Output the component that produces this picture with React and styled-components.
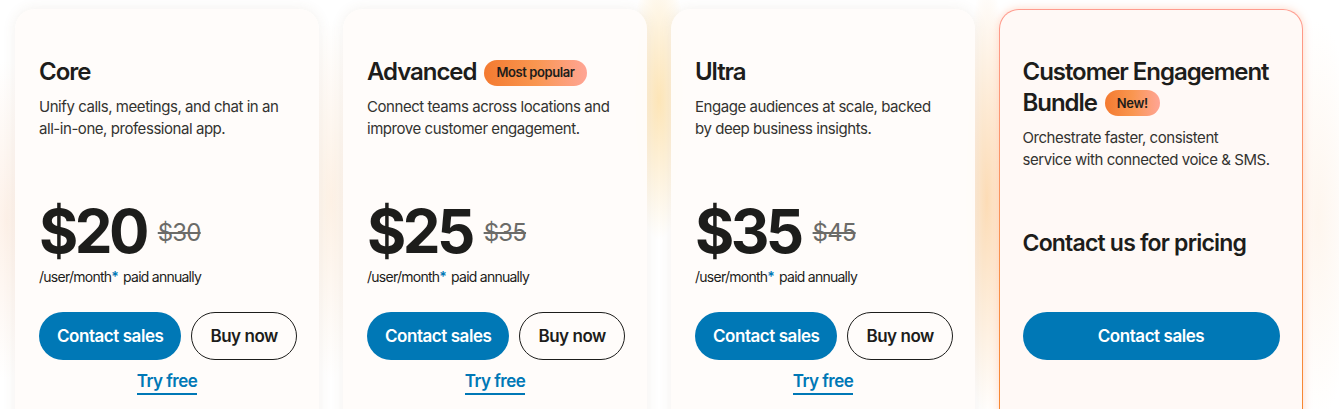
import React from "react";
import styled, { createGlobalStyle, css } from "styled-components";

const GlobalStyle = createGlobalStyle`
  html, body {
    margin: 0;
    padding: 0;
    background: #ffffff;
    overflow: hidden;
  }
  body {
    font-family: Inter, "Liberation Sans", Arial, sans-serif;
    color: #1d1d1b;
  }
`;

const Page = styled.div`
  height: 409px;
  padding: 9px 15px 0;
  box-sizing: border-box;
  background:
    radial-gradient(ellipse 30px 140px at 659px 100px, rgba(252, 212, 135, 0.6), rgba(252, 212, 135, 0) 100%),
    radial-gradient(ellipse 26px 220px at 987px 200px, rgba(250, 190, 120, 0.55), rgba(250, 190, 120, 0) 100%),
    radial-gradient(ellipse 40px 160px at 6px 220px, rgba(250, 215, 190, 0.35), rgba(250, 215, 190, 0) 100%),
    radial-gradient(ellipse 30px 180px at 331px 200px, rgba(250, 215, 180, 0.35), rgba(250, 215, 180, 0) 100%),
    radial-gradient(ellipse 40px 200px at 1318px 220px, rgba(252, 225, 200, 0.3), rgba(252, 225, 200, 0) 100%),
    #ffffff;
`;

const Grid = styled.div`
  display: grid;
  grid-template-columns: repeat(4, 304px);
  gap: 24px;
`;

const Card = styled.div`
  height: 430px;
  box-sizing: border-box;
  padding: 47px 24px 0;
  border-radius: 20px;
  background: rgba(255, 252, 250, 0.94);
  box-shadow: 0 0 14px rgba(120, 90, 60, 0.09);
  display: flex;
  flex-direction: column;

  ${(p) =>
    p.$featured &&
    css`
      border: 1.5px solid transparent;
      padding: 45.5px 22.5px 0;
      background:
        linear-gradient(#fff9f6, #fff9f6) padding-box,
        linear-gradient(180deg, #ff9b8e 0%, #f9904a 60%, #f6852c 100%) border-box;
      box-shadow: 0 0 8px rgba(255, 140, 90, 0.35);
    `}
`;

const Header = styled.div`
  min-height: 142px;
`;

const Title = styled.h3`
  margin: 0;
  font-size: 24px;
  line-height: 31px;
  font-weight: 600;
  letter-spacing: -1.05px;
  color: #1d1d1b;
`;

const Badge = styled.span`
  display: inline-flex;
  align-items: center;
  height: 26px;
  padding: 0 12px;
  margin-left: 8px;
  border-radius: 13px;
  vertical-align: 3px;
  font-size: 13px;
  font-weight: 600;
  letter-spacing: -0.4px;
  color: #1d1d1b;
  background: linear-gradient(90deg, #f47a30 0%, #f99650 50%, #ffa595 100%);
`;

const Desc = styled.p`
  margin: 9px 0 0;
  font-size: 15px;
  line-height: 22px;
  letter-spacing: -0.45px;
  color: #333330;
  white-space: nowrap;
`;

const PriceBlock = styled.div`
  height: 90px;
  display: flex;
  flex-direction: column;
  justify-content: center;
`;

const PriceRow = styled.div`
  display: flex;
  align-items: center;
  gap: 12px;
  height: 62px;
`;

const Price = styled.span`
  font-size: 60px;
  font-weight: 700;
  letter-spacing: -3.6px;
  line-height: 62px;
  color: #1d1d1b;
`;

const OldPrice = styled.s`
  font-size: 24px;
  letter-spacing: -0.8px;
  color: #6b6b68;
  text-decoration-thickness: 1.5px;
  margin-top: 2px;
`;

const Terms = styled.div`
  margin-top: 6px;
  font-size: 14px;
  line-height: 18px;
  letter-spacing: -0.75px;
  color: #1d1d1b;
`;

const Star = styled.span`
  color: #0077b6;
  font-weight: 600;
  margin-right: 5px;
`;

const Contact = styled.div`
  font-size: 23px;
  font-weight: 600;
  letter-spacing: -0.8px;
  color: #1d1d1b;
`;

const Actions = styled.div`
  margin-top: 24px;
  display: flex;
  gap: 10px;
`;

const Button = styled.button`
  flex: none;
  height: 48px;
  padding: 0 18px;
  border-radius: 24px;
  white-space: nowrap;
  font-family: inherit;
  font-size: 17px;
  font-weight: 600;
  letter-spacing: -0.45px;
  cursor: pointer;
  box-sizing: border-box;
  ${(p) =>
    p.$primary
      ? css`
          background: #0078b6;
          color: #ffffff;
          border: none;
        `
      : css`
          background: transparent;
          color: #1d1d1b;
          border: 1px solid #1d1d1b;
        `}
  ${(p) => p.$wide && css`flex: 1;`}
`;

const TryRow = styled.div`
  width: 256px;
  display: flex;
  justify-content: center;
  margin-top: 9px;
`;

const TryLink = styled.a`
  font-size: 17px;
  font-weight: 600;
  letter-spacing: -0.5px;
  line-height: 24px;
  color: #0078b6;
  text-decoration: none;
  border-bottom: 2px solid #0078b6;
`;

const plans = [
  {
    name: "Core",
    desc: ["Unify calls, meetings, and chat in an", "all-in-one, professional app."],
    price: "$20",
    old: "$30",
  },
  {
    name: "Advanced",
    badge: "Most popular",
    desc: ["Connect teams across locations and", "improve customer engagement."],
    price: "$25",
    old: "$35",
  },
  {
    name: "Ultra",
    desc: ["Engage audiences at scale, backed", "by deep business insights."],
    price: "$35",
    old: "$45",
  },
];

const Lines = ({ lines }) =>
  lines.map((line, i) => (
    <React.Fragment key={i}>
      {i > 0 && <br />}
      {line}
    </React.Fragment>
  ));

const App = () => {
  return (
    <>
      <GlobalStyle />
      <Page>
        <Grid>
          {plans.map((plan) => (
            <Card key={plan.name}>
              <Header>
                <Title>
                  {plan.name}
                  {plan.badge && <Badge>{plan.badge}</Badge>}
                </Title>
                <Desc>
                  <Lines lines={plan.desc} />
                </Desc>
              </Header>
              <PriceBlock>
                <PriceRow>
                  <Price>{plan.price}</Price>
                  <OldPrice>{plan.old}</OldPrice>
                </PriceRow>
                <Terms>
                  /user/month<Star>*</Star>paid annually
                </Terms>
              </PriceBlock>
              <Actions>
                <Button $primary>Contact sales</Button>
                <Button>Buy now</Button>
              </Actions>
              <TryRow>
                <TryLink href="#">Try free</TryLink>
              </TryRow>
            </Card>
          ))}

          <Card $featured>
            <Header>
              <Title>
                Customer Engagement Bundle
                <Badge>New!</Badge>
              </Title>
              <Desc>
                <Lines lines={["Orchestrate faster, consistent", "service with connected voice & SMS."]} />
              </Desc>
            </Header>
            <PriceBlock>
              <Contact>Contact us for pricing</Contact>
            </PriceBlock>
            <Actions>
              <Button $primary $wide>Contact sales</Button>
            </Actions>
          </Card>
        </Grid>
      </Page>
    </>
  );
};

export default App;
